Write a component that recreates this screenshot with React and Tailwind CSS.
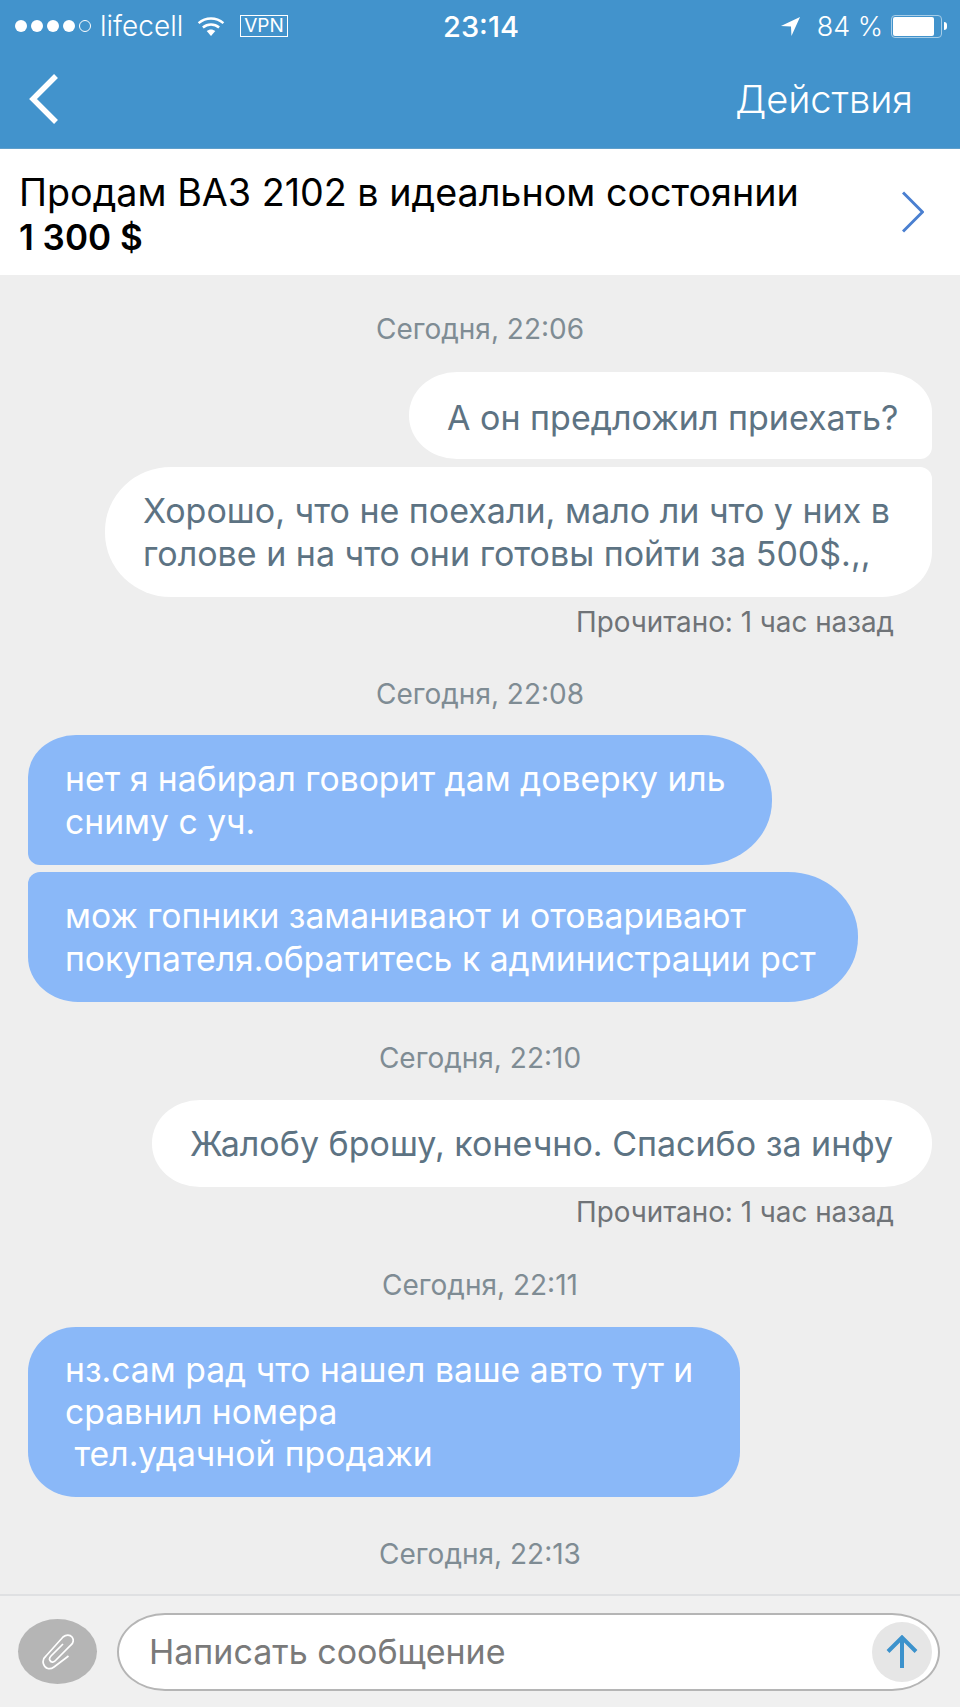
const font = { fontFamily: "Inter, 'Noto Sans', sans-serif" };

const Stamp = ({ children, className = "" }) => (
  <p className={`text-center text-[28px] leading-[32px] text-[#7f8c94] ${className}`}>{children}</p>
);

const Read = ({ className = "" }) => (
  <p className={`pr-[66px] text-right text-[27.8px] leading-[32px] text-[#6f7377] ${className}`}>
    Прочитано: 1 час назад
  </p>
);

const Mine = ({ children, className = "" }) => (
  <div className={`ml-auto mr-[28px] bg-white py-[22px] pl-[38px] text-[34px] leading-[43px] text-[#5d7383] whitespace-pre-line ${className}`}>
    {children}
  </div>
);

const Theirs = ({ children, className = "" }) => (
  <div className={`ml-[28px] bg-[#8ab8f8] py-[22px] pl-[37px] text-[33.7px] text-white whitespace-pre-wrap ${className}`}>
    {children}
  </div>
);

export default function App() {
  return (
    <div className="flex h-[1707px] w-[960px] flex-col overflow-hidden bg-[#eeeeee]" style={font}>
      <header className="h-[149px] shrink-0 border-b border-[#5f9fcb] bg-[#4293cc] text-white">
        <div className="flex h-[50px] items-center pl-[15px] pr-[13px] pt-[2px]">
          <div className="flex flex-1 items-center">
            <div className="flex items-center gap-[4px]">
              <span className="h-[12px] w-[12px] rounded-full bg-white" />
              <span className="h-[12px] w-[12px] rounded-full bg-white" />
              <span className="h-[12px] w-[12px] rounded-full bg-white" />
              <span className="h-[12px] w-[12px] rounded-full bg-white" />
              <span className="h-[12px] w-[12px] rounded-full border border-white" />
            </div>
            <span className="ml-[9px] text-[28px] font-light leading-none">lifecell</span>
            <svg className="ml-[14px]" width="28" height="21" viewBox="0 0 28 22" fill="none">
              <path d="M1 7.5C8.5 1 19.5 1 27 7.5" stroke="white" strokeWidth="2.6" />
              <path d="M5.5 12C10.5 7.8 17.5 7.8 22.5 12" stroke="white" strokeWidth="2.6" />
              <path d="M9.5 15.8C12.2 13.6 15.8 13.6 18.5 15.8L14 21Z" fill="white" />
            </svg>
            <span className="ml-[15px] border border-white px-[3px] text-[19px] leading-[20px]">VPN</span>
          </div>
          <span className="text-[29px] font-medium leading-none">23:14</span>
          <div className="flex flex-1 items-center justify-end">
            <svg width="21" height="21" viewBox="0 0 22 22" className="mr-[16px]">
              <path d="M21 1L1 10.5L11.5 11L12 21Z" fill="white" />
            </svg>
            <span className="text-[27px] font-light leading-none">84 %</span>
            <div className="ml-[8px] flex h-[23px] w-[51px] rounded-[4px] border border-[#a6cde8] p-[1px]">
              <div className="h-full w-[41px] rounded-[2px] bg-white" />
            </div>
            <div className="ml-[2px] h-[8px] w-[3px] rounded-r-full bg-white" />
          </div>
        </div>
        <div className="flex h-[98px] items-start justify-between pl-[28px] pr-[47px]">
          <svg className="mt-[24px]" width="32" height="50" viewBox="0 0 32 50" fill="none">
            <path d="M28 2L5 25L28 48" stroke="white" strokeWidth="5.5" />
          </svg>
          <span className="mt-[27px] text-[38px] font-light leading-[44px]">Действия</span>
        </div>
      </header>

      <div className="flex h-[126px] shrink-0 items-center justify-between bg-white pl-[19px] pr-[36px]">
        <div className="pt-[3px] text-black">
          <p className="text-[37.7px] leading-[44px]">Продам ВАЗ 2102 в идеальном состоянии</p>
          <p className="mt-[2px] text-[35px] font-semibold leading-[42px]">1 300 $</p>
        </div>
        <svg width="22" height="42" viewBox="0 0 22 42" fill="none">
          <path d="M1 1.5L20.5 21L1 40.5" stroke="#4a7fd0" strokeWidth="3" />
        </svg>
      </div>

      <main className="min-h-0 flex-1 overflow-hidden pt-[38px]">
        <Stamp>Сегодня, 22:06</Stamp>
        <Mine className="mt-[27px] w-[523px] rounded-tl-[48px_43px] rounded-bl-[48px_43px] rounded-tr-[49px_40px] rounded-br-[12px]">
          <span className="relative top-[2px]">А он предложил приехать?</span>
        </Mine>
        <Mine className="mt-[8px] w-[827px] rounded-tl-[66px_64px] rounded-bl-[66px_64px] rounded-tr-[12px] rounded-br-[50px_45px]">
          {"Хорошо, что не поехали, мало ли что у них в\nголове и на что они готовы пойти за 500$.,,"}
        </Mine>
        <Read className="mt-[9px]" />
        <Stamp className="mt-[40px]">Сегодня, 22:08</Stamp>
        <Theirs className="mt-[25px] w-[744px] leading-[43px] rounded-tl-[48px_42px] rounded-bl-[12px] rounded-tr-[70px_64px] rounded-br-[70px_64px]">
          {"нет я набирал говорит дам доверку иль\nсниму с уч."}
        </Theirs>
        <Theirs className="mt-[7px] w-[830px] leading-[43px] rounded-tl-[12px] rounded-bl-[50px_45px] rounded-tr-[70px_64px] rounded-br-[70px_64px]">
          {"мож гопники заманивают и отоваривают\nпокупателя.обратитесь к администрации рст"}
        </Theirs>
        <Stamp className="mt-[40px]">Сегодня, 22:10</Stamp>
        <Mine className="mt-[26px] w-[780px] rounded-[48px_/_43px]">Жалобу брошу, конечно. Спасибо за инфу</Mine>
        <Read className="mt-[9px]" />
        <Stamp className="mt-[41px]">Сегодня, 22:11</Stamp>
        <Theirs className="mt-[26px] w-[712px] leading-[42px] rounded-[48px_/_45px]">
          {"нз.сам рад что нашел ваше авто тут и\nсравнил номера\n тел.удачной продажи"}
        </Theirs>
        <Stamp className="mt-[41px]">Сегодня, 22:13</Stamp>
      </main>

      <footer className="flex h-[113px] shrink-0 items-center border-t-2 border-[#dfe0e2] bg-[#f0f0f0] pl-[18px] pr-[20px]">
        <div className="flex h-[65px] w-[79px] items-center justify-center rounded-[50%] bg-[#b5b5b5]">
          <svg width="32" height="36" viewBox="0 0 32 36" fill="none" stroke="white" strokeWidth="1.7">
            <path d="M26.5 22L12 33C8 36 3 35 1.5 30C0.5 27 1.5 24 4 22L21 3C24 0.5 28 0.5 30 3C32 5.5 31.5 9 29 11L13 27C11.5 28.5 9 28.5 8 26.5C7 25 7.5 23.5 9 22L21 10" />
          </svg>
        </div>
        <div className="ml-[20px] flex h-[78px] flex-1 items-center justify-between rounded-[48px_/_39px] border-2 border-[#b5b5b5] bg-white pl-[30px] pr-[6px]">
          <span className="text-[34px] text-[#7a7a7a]">Написать сообщение</span>
          <div className="flex h-[60px] w-[60px] items-center justify-center rounded-full bg-[#e6e6e6]">
            <svg width="32" height="33" viewBox="0 0 32 33" fill="none" stroke="#3c92cc" strokeWidth="4">
              <path d="M2 16.5L16 2.5L30 16.5" />
              <path d="M16 3V33" />
            </svg>
          </div>
        </div>
      </footer>
    </div>
  );
}
